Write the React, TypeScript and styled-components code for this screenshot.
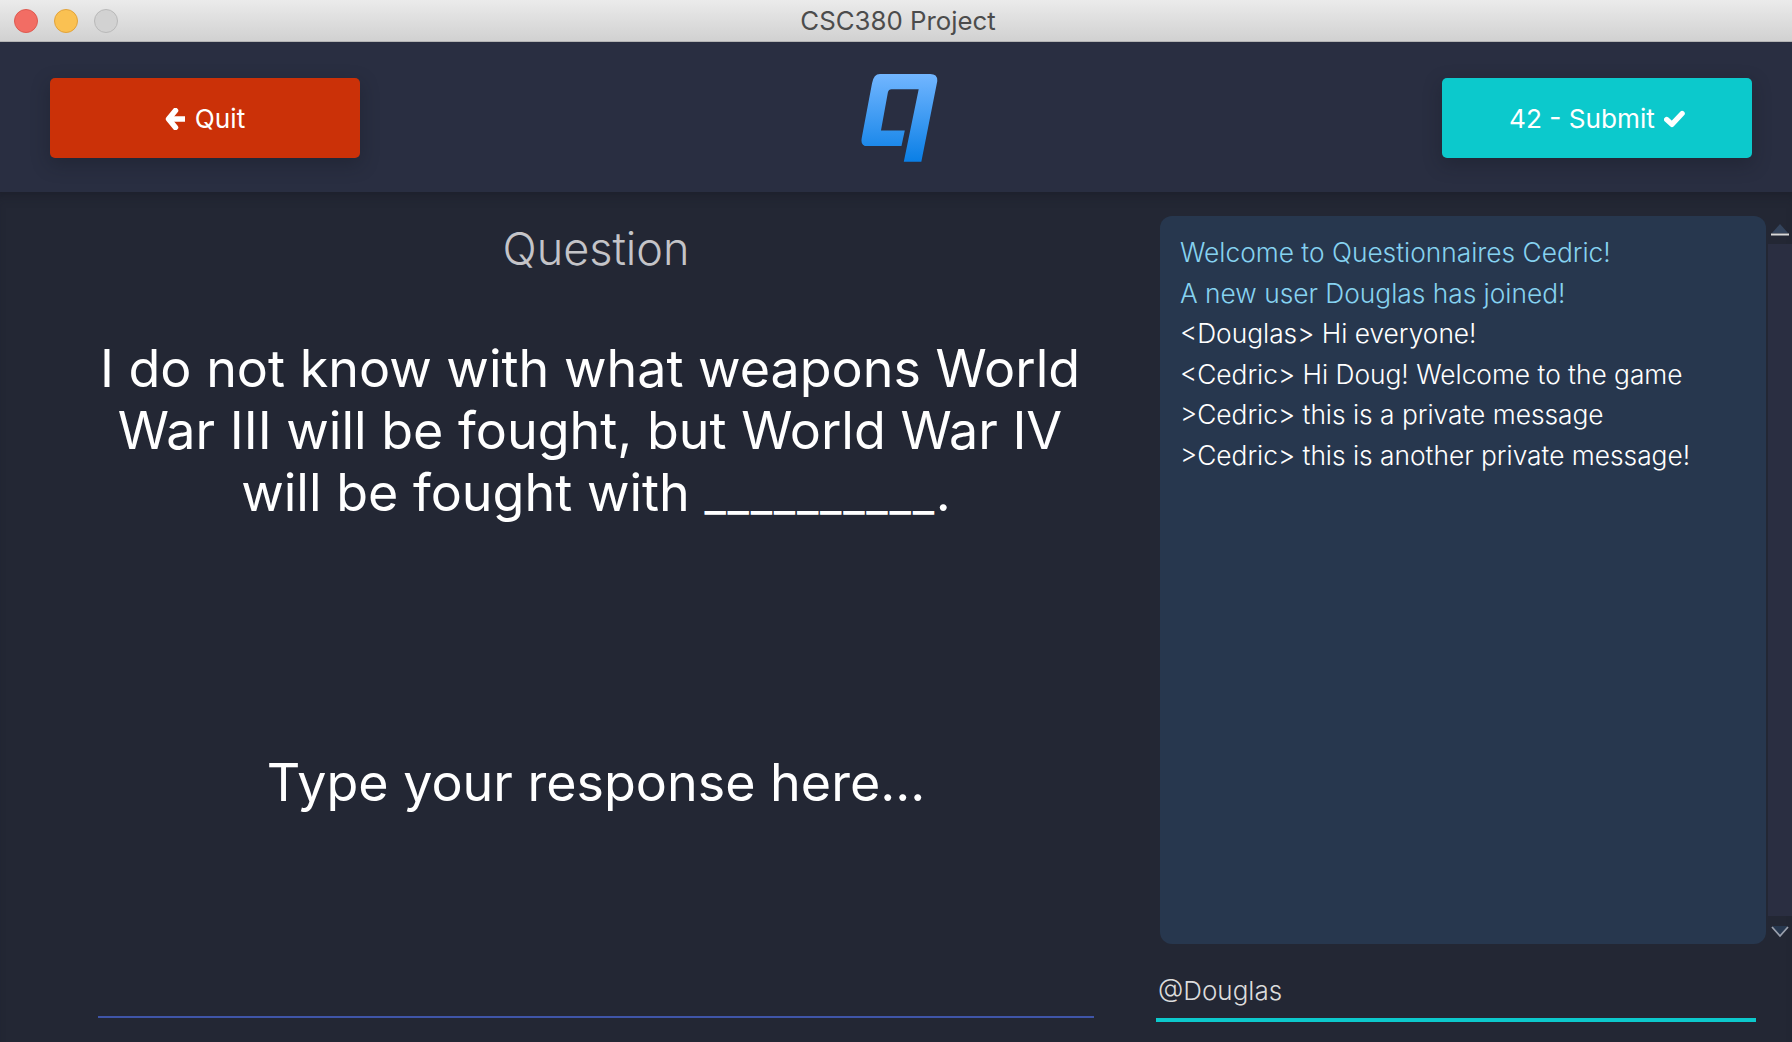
import React from "react";
import styled, { createGlobalStyle } from "styled-components";

const Global = createGlobalStyle`
  html, body { margin: 0; padding: 0; height: 100%; overflow: hidden; background: #232734; }
  #root { height: 100%; }
  * { box-sizing: border-box; }
`;

const Windowed = styled.div`
  width: 1792px;
  height: 1042px;
  display: flex;
  flex-direction: column;
  background: #232734;
  font-family: Inter, "Liberation Sans", sans-serif;
  color: #fff;
`;

const TitleBar = styled.div`
  flex: 0 0 42px;
  display: flex;
  align-items: center;
  position: relative;
  padding-left: 14px;
  gap: 16px;
  background: linear-gradient(#ebebeb, #d1d1d1);
  border-bottom: 1px solid #b4b4b4;
`;

const Light = styled.span<{ $fill: string; $edge: string }>`
  width: 24px;
  height: 24px;
  border-radius: 50%;
  background: ${(p) => p.$fill};
  border: 1px solid ${(p) => p.$edge};
`;

const WindowTitle = styled.div`
  position: absolute;
  left: 0;
  right: 0;
  top: 0;
  line-height: 41px;
  text-align: center;
  font-size: 25.8px;
  color: #4c4c4c;
  padding-left: 4px;
`;

const Header = styled.header`
  flex: 0 0 150px;
  display: flex;
  align-items: center;
  justify-content: space-between;
  padding: 2px 40px 0 50px;
  background: #292e41;
`;

const ActionButton = styled.button<{ $bg: string }>`
  width: 310px;
  height: 80px;
  border: 0;
  padding: 1px 0 0;
  border-radius: 5px;
  background: ${(p) => p.$bg};
  color: #fff;
  display: flex;
  align-items: center;
  justify-content: center;
  gap: 9px;
  font-family: inherit;
  font-size: 26.2px;
  box-shadow: 0 6px 18px rgba(20, 22, 32, 0.35);
`;

const Logo = styled.svg`
  width: 78px;
  height: 88px;
  display: block;
  margin: 0 4px 0 0;
`;

const Main = styled.main`
  flex: 1;
  min-height: 0;
  display: grid;
  grid-template-columns: 1155px 637px;
  box-shadow: inset 0 10px 12px -8px rgba(20, 22, 32, 0.5);
`;

const QuestionColumn = styled.section`
  display: flex;
  flex-direction: column;
  align-items: center;
  padding: 0 0 24px 37px;
`;

const Heading = styled.h2`
  margin: 31px 0 0;
  font-size: 45px;
  line-height: 52px;
  font-weight: 300;
  color: #c4c4c8;
`;

const QuestionText = styled.div`
  margin: 63px 0 0;
  text-align: center;
  font-size: 52px;
  line-height: 62px;
  font-weight: 400;
`;

const QuestionLine = styled.div<{ $wrapped?: boolean }>`
  white-space: nowrap;
  padding-right: ${(p) => (p.$wrapped ? "12px" : "0")};
`;

const Blank = styled.span`
  font-size: 47px;
  letter-spacing: 1.7px;
`;

const ResponseField = styled.div`
  margin-top: auto;
  width: 996px;
  height: 2px;
  background: #3f55a8;
`;

const ResponseText = styled.div`
  margin-top: 227px;
  font-size: 52px;
  line-height: 62px;
  font-weight: 400;
`;

const ChatColumn = styled.aside`
  display: flex;
  flex-direction: column;
  padding-top: 24px;
`;

const ChatRow = styled.div`
  display: flex;
  height: 728px;
  padding-left: 5px;
`;

const ChatLog = styled.div`
  width: 606px;
  border-radius: 12px;
  background: #27374e;
  padding: 17px 20px;
`;

const ChatLine = styled.div<{ $system?: boolean }>`
  font-size: 26.3px;
  line-height: 40.6px;
  font-weight: 350;
  color: ${(p) => (p.$system ? "#86d2f0" : "#fff")};
  white-space: nowrap;
`;

const Scrollbar = styled.div`
  flex: 1;
  display: flex;
  flex-direction: column;
  align-items: center;
  padding: 8px 0 0 2px;
`;

const Track = styled.div`
  flex: 0 0 672px;
  width: 100%;
  margin: 7px 0 9px;
  background: #2a2e41;
`;

const ChatInput = styled.div`
  width: 600px;
  margin: 27px 0 0 1px;
  height: 51px;
  border-bottom: 4px solid #0cc9cc;
  padding-left: 2px;
  font-size: 26px;
  line-height: 40px;
  font-weight: 350;
  color: #dcdcdc;
`;

const messages = [
  { text: "Welcome to Questionnaires Cedric!", system: true },
  { text: "A new user Douglas has joined!", system: true },
  { text: "<Douglas> Hi everyone!" },
  { text: "<Cedric> Hi Doug! Welcome to the game" },
  { text: ">Cedric> this is a private message" },
  { text: ">Cedric> this is another private message!" },
];

export default function App() {
  return (
    <Windowed>
      <Global />
      <TitleBar>
        <Light $fill="#f26d64" $edge="#de5a50" />
        <Light $fill="#fac152" $edge="#e2a33b" />
        <Light $fill="#d2d2d2" $edge="#b9b9b9" />
        <WindowTitle>CSC380 Project</WindowTitle>
      </TitleBar>
      <Header>
        <ActionButton $bg="#cb3108">
          <svg width="21" height="22" viewBox="0 0 21 22">
            <path d="M10.5 2.5 L3.5 11 L10.5 19.5" fill="none" stroke="#fff" strokeWidth="5.5" strokeLinecap="round" strokeLinejoin="round" />
            <path d="M5 11 H20" fill="none" stroke="#fff" strokeWidth="5.5" />
          </svg>
          Quit
        </ActionButton>
        <Logo viewBox="240 222 235 266">
          <defs>
            <linearGradient id="logoFill" x1="0" y1="0" x2="0" y2="1">
              <stop offset="0" stopColor="#72b6ff" />
              <stop offset="1" stopColor="#0a7fe6" />
            </linearGradient>
          </defs>
          <path
            fill="url(#logoFill)"
            d="M300 222 H452 Q475 222 473 245 L425 487 H372 L417 268 H335 Q326 268 324 277 L303 393 H375 L365 440 H262 Q240 440 245 415 L276 250 Q281 222 300 222 Z"
          />
        </Logo>
        <ActionButton $bg="#0cc9cc">
          42 - Submit
          <svg width="21" height="18" viewBox="0 0 22 18">
            <path d="M2.8 9.5 L8.3 14.6 L19 3.2" fill="none" stroke="#fff" strokeWidth="5.5" strokeLinecap="round" strokeLinejoin="round" />
          </svg>
        </ActionButton>
      </Header>
      <Main>
        <QuestionColumn>
          <Heading>Question</Heading>
          <QuestionText>
            <QuestionLine $wrapped>I do not know with what weapons World</QuestionLine>
            <QuestionLine $wrapped>War III will be fought, but World War IV</QuestionLine>
            <QuestionLine>
              will be fought with <Blank>__________</Blank>.
            </QuestionLine>
          </QuestionText>
          <ResponseText>Type your response here...</ResponseText>
          <ResponseField />
        </QuestionColumn>
        <ChatColumn>
          <ChatRow>
            <ChatLog>
              {messages.map((m) => (
                <ChatLine key={m.text} $system={m.system}>
                  {m.text}
                </ChatLine>
              ))}
            </ChatLog>
            <Scrollbar>
              <svg width="20" height="13" viewBox="0 0 20 13">
                <path d="M10 0 L18 9 H2 Z" fill="#33435b" />
                <path d="M1 10.5 H19" stroke="#d8d8d8" strokeWidth="2" />
              </svg>
              <Track />
              <svg width="20" height="14" viewBox="0 0 20 14">
                <path d="M2 1 H18 L10 11 Z" fill="#27374e" />
                <path d="M2 2 L10 11 L18 2" fill="none" stroke="#9aa0ad" strokeWidth="1.8" />
              </svg>
            </Scrollbar>
          </ChatRow>
          <ChatInput>@Douglas</ChatInput>
        </ChatColumn>
      </Main>
    </Windowed>
  );
}
